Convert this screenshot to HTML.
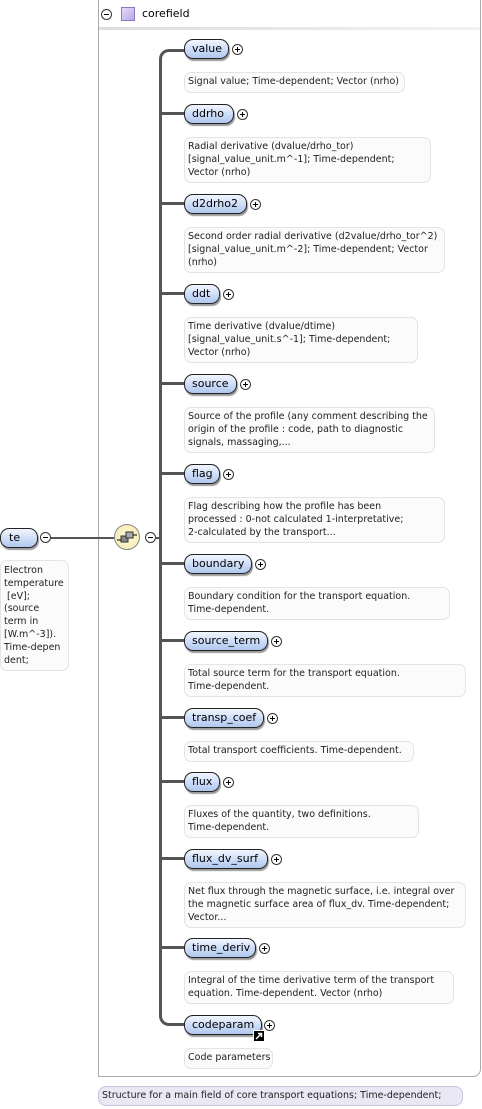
<!DOCTYPE html>
<html><head><meta charset="utf-8"><style>
body{margin:0;width:482px;height:1109px;background:#fff;position:relative;overflow:hidden;font-family:"DejaVu Sans","Liberation Sans",sans-serif;}
.a{position:absolute}
.n{position:absolute;height:18px;border:1px solid #222;border-radius:9px;background:linear-gradient(#f2f6fe,#c8d9f6 60%,#b0c8ee);box-shadow:1px 2px 1px #999;font-size:11px;line-height:18px;padding-left:7px;box-sizing:content-box;color:#000}
.p{position:absolute;width:11px;height:11px}
.d{position:absolute;border:1px solid #e4e4e4;border-radius:7px;background:#fbfbfb;font-size:9.5px;line-height:13px;padding:2px 3px;color:#222;white-space:nowrap;box-sizing:border-box}
.br{position:absolute;left:160px;height:3px;width:25px;background:#555}
</style></head><body>
<svg width="0" height="0" style="position:absolute"><defs>
<g id="pl"><circle cx="5.5" cy="5.5" r="5" fill="#fff" stroke="#333"/><path d="M3 5.5H8M5.5 3V8" stroke="#000"/></g>
<g id="mi"><circle cx="5.5" cy="5.5" r="5" fill="#fff" stroke="#333"/><path d="M3 5.5H8" stroke="#000"/></g>
</defs></svg>
<div class="a" style="left:98px;top:-2px;width:381px;height:1077px;border:1px solid #aaa;border-radius:0 0 8px 0"></div>
<div class="a" style="left:99px;top:27px;width:381px;height:3px;background:linear-gradient(90deg,#ddd,#f2f2f2)"></div>
<svg class="p" style="left:101px;top:9px"><use href="#mi"/></svg>
<div class="a" style="left:121px;top:7px;width:12px;height:12px;border:1px solid #8a78c0;background:linear-gradient(135deg,#e6dcfa,#b7a6e6)"></div>
<div class="a" style="left:142px;top:7px;font-size:11px">corefield</div>

<div class="a" style="left:159px;top:49px;width:26px;height:977px;border-left:3px solid #555;border-top:3px solid #555;border-bottom:3px solid #555;border-radius:10px 0 0 10px;box-sizing:border-box"></div>

<div class="a" style="left:0;top:528px;width:28px;height:18px;border:1px solid #222;border-radius:9px;background:linear-gradient(#f2f6fe,#b0c8ee);box-shadow:1px 2px 1px #999;font-size:11px;line-height:18px;padding-left:8px">te</div>
<svg class="p" style="left:40px;top:532px"><use href="#mi"/></svg>
<div class="a" style="left:51px;top:537px;width:65px;height:2px;background:#555"></div>
<div class="a" style="left:114px;top:524px;width:26px;height:26px;border-radius:50%;border:1px solid #888;background:radial-gradient(#fdfbe0,#f3e9a4);box-sizing:border-box"></div>
<svg class="a" style="left:116px;top:529px" width="22" height="18"><rect x="5" y="7" width="7" height="6" fill="#888" stroke="#333"/><rect x="10" y="3" width="7" height="6" fill="#aaa" stroke="#333"/><line x1="1" y1="11" x2="5" y2="11" stroke="#000"/><line x1="17" y1="6" x2="21" y2="6" stroke="#000"/></svg>
<svg class="p" style="left:145px;top:532px"><use href="#mi"/></svg>
<div class="a" style="left:155px;top:537px;width:6px;height:2px;background:#555"></div>
<div class="d" style="left:0;top:560px;width:69px;height:111px;line-height:12.8px;padding-top:4px">Electron<br>temperature<br>&nbsp;[eV];<br>(source<br>term in<br>[W.m^-3]).<br>Time-depen<br>dent;</div>

<div class="br" style="top:112px"></div><div class="br" style="top:202px"></div><div class="br" style="top:292px"></div><div class="br" style="top:382px"></div><div class="br" style="top:472px"></div><div class="br" style="top:562px"></div><div class="br" style="top:639px"></div><div class="br" style="top:716px"></div><div class="br" style="top:780px"></div><div class="br" style="top:857px"></div><div class="br" style="top:946px"></div>

<div class="n" style="left:184px;top:39px;width:36px">value</div><svg class="p" style="left:232px;top:44px"><use href="#pl"/></svg>
<div class="d" style="left:184px;top:72px;width:221px;height:21px">Signal value; Time-dependent; Vector (nrho)</div>

<div class="n" style="left:184px;top:104px;width:41px">ddrho</div><svg class="p" style="left:237px;top:109px"><use href="#pl"/></svg>
<div class="d" style="left:184px;top:137px;width:247px;height:46px">Radial derivative (dvalue/drho_tor)<br>[signal_value_unit.m^-1]; Time-dependent;<br>Vector (nrho)</div>

<div class="n" style="left:184px;top:194px;width:54px">d2drho2</div><svg class="p" style="left:250px;top:199px"><use href="#pl"/></svg>
<div class="d" style="left:184px;top:227px;width:261px;height:46px">Second order radial derivative (d2value/drho_tor^2)<br>[signal_value_unit.m^-2]; Time-dependent; Vector<br>(nrho)</div>

<div class="n" style="left:184px;top:284px;width:27px">ddt</div><svg class="p" style="left:223px;top:289px"><use href="#pl"/></svg>
<div class="d" style="left:184px;top:317px;width:234px;height:46px">Time derivative (dvalue/dtime)<br>[signal_value_unit.s^-1]; Time-dependent;<br>Vector (nrho)</div>

<div class="n" style="left:184px;top:374px;width:44px">source</div><svg class="p" style="left:240px;top:379px"><use href="#pl"/></svg>
<div class="d" style="left:184px;top:407px;width:251px;height:46px">Source of the profile (any comment describing the<br>origin of the profile : code, path to diagnostic<br>signals, massaging,...</div>

<div class="n" style="left:184px;top:464px;width:27px">flag</div><svg class="p" style="left:223px;top:469px"><use href="#pl"/></svg>
<div class="d" style="left:184px;top:497px;width:261px;height:46px">Flag describing how the profile has been<br>processed : 0-not calculated 1-interpretative;<br>2-calculated by the transport...</div>

<div class="n" style="left:184px;top:554px;width:59px">boundary</div><svg class="p" style="left:255px;top:559px"><use href="#pl"/></svg>
<div class="d" style="left:184px;top:587px;width:266px;height:33px">Boundary condition for the transport equation.<br>Time-dependent.</div>

<div class="n" style="left:184px;top:631px;width:75px">source_term</div><svg class="p" style="left:271px;top:636px"><use href="#pl"/></svg>
<div class="d" style="left:184px;top:664px;width:282px;height:33px">Total source term for the transport equation.<br>Time-dependent.</div>

<div class="n" style="left:184px;top:708px;width:71px">transp_coef</div><svg class="p" style="left:267px;top:713px"><use href="#pl"/></svg>
<div class="d" style="left:184px;top:741px;width:230px;height:21px">Total transport coefficients. Time-dependent.</div>

<div class="n" style="left:184px;top:772px;width:27px">flux</div><svg class="p" style="left:223px;top:777px"><use href="#pl"/></svg>
<div class="d" style="left:184px;top:805px;width:235px;height:33px">Fluxes of the quantity, two definitions.<br>Time-dependent.</div>

<div class="n" style="left:184px;top:849px;width:75px">flux_dv_surf</div><svg class="p" style="left:271px;top:854px"><use href="#pl"/></svg>
<div class="d" style="left:184px;top:882px;width:282px;height:46px">Net flux through the magnetic surface, i.e. integral over<br>the magnetic surface area of flux_dv. Time-dependent;<br>Vector...</div>

<div class="n" style="left:184px;top:938px;width:63px">time_deriv</div><svg class="p" style="left:259px;top:943px"><use href="#pl"/></svg>
<div class="d" style="left:184px;top:971px;width:270px;height:33px">Integral of the time derivative term of the transport<br>equation. Time-dependent. Vector (nrho)</div>

<div class="n" style="left:184px;top:1015px;width:69px">codeparam</div><svg class="p" style="left:264px;top:1020px"><use href="#pl"/></svg>
<svg class="a" style="left:253px;top:1030px" width="12" height="12"><rect x="0.5" y="0.5" width="11" height="11" fill="#000" stroke="#fff"/><path d="M3 9L8 4M5 3.5H8.5V7" stroke="#fff" stroke-width="1.5" fill="none"/></svg>
<div class="d" style="left:184px;top:1048px;width:89px;height:21px">Code parameters</div>

<div class="d" style="left:98px;top:1086px;width:365px;height:20px;background:#ebe8f5;border-color:#c9c3de;border-radius:8px">Structure for a main field of core transport equations; Time-dependent;</div>
</body></html>
